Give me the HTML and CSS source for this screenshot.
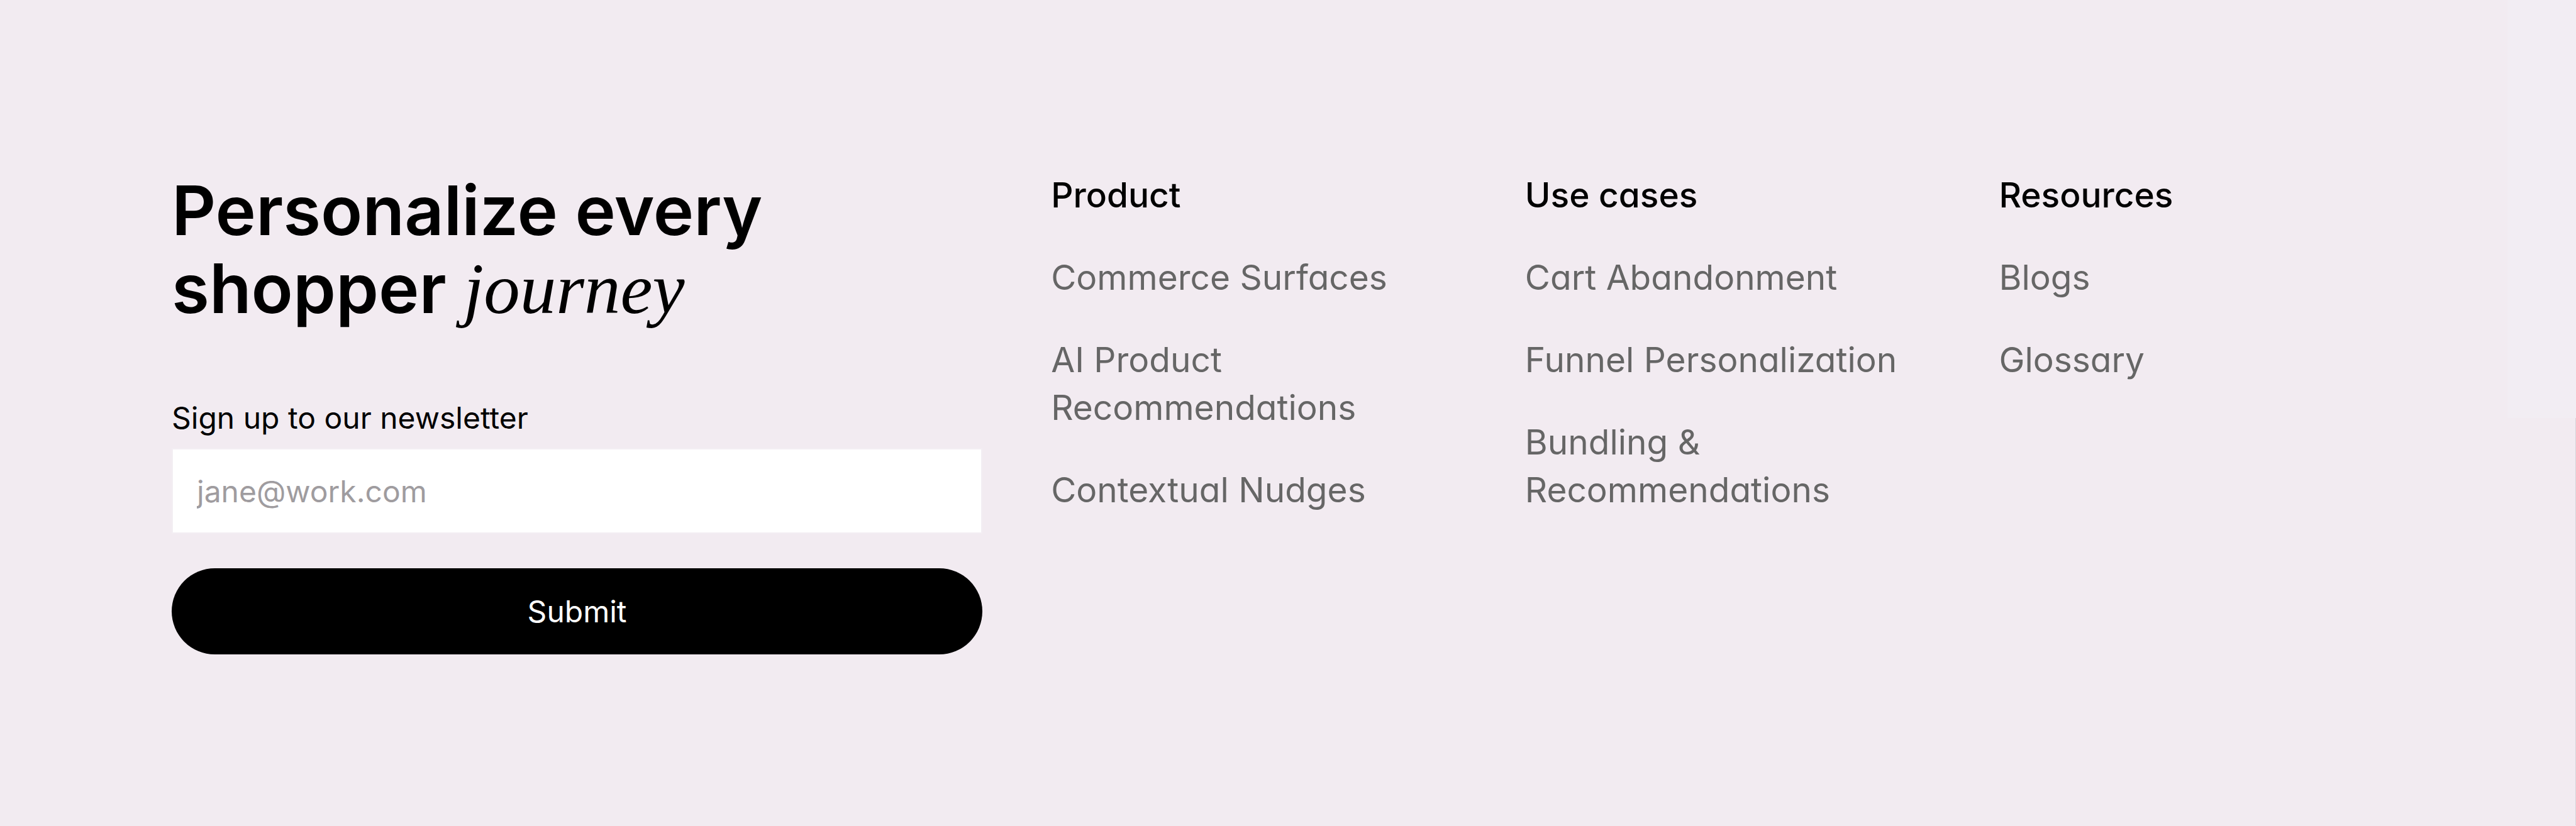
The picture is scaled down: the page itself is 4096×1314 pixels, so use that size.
FILE: index.html
```html
<!DOCTYPE html>
<html lang="en">
<head>
    <meta charset="UTF-8">
    <meta name="viewport" content="width=device-width, initial-scale=1.0">
    <title>Personalize every shopper journey</title>
    <link rel="stylesheet" href="styles.css">
</head>
<body>
    <footer class="footer">
        <div class="footer-main">
            <h2 class="footer-title">Personalize every<br>shopper <em>journey</em></h2>

            <form class="newsletter" action="#">
                <label class="newsletter-label" for="email">Sign up to our newsletter</label>
                <input class="newsletter-input" type="email" id="email" name="email" placeholder="jane@work.com">
                <button class="newsletter-btn" type="submit">Submit</button>
            </form>
        </div>

        <nav class="footer-col" aria-labelledby="col-product">
            <h3 id="col-product">Product</h3>
            <a href="#">Commerce Surfaces</a>
            <a href="#">AI Product Recommendations</a>
            <a href="#">Contextual Nudges</a>
        </nav>

        <nav class="footer-col" aria-labelledby="col-cases">
            <h3 id="col-cases">Use cases</h3>
            <a href="#">Cart Abandonment</a>
            <a href="#">Funnel Personalization</a>
            <a href="#">Bundling &amp; Recommendations</a>
        </nav>

        <nav class="footer-col" aria-labelledby="col-resources">
            <h3 id="col-resources">Resources</h3>
            <a href="#">Blogs</a>
            <a href="#">Glossary</a>
        </nav>
    </footer>
</body>
</html>
```
FILE: styles.css
```css
* {
    box-sizing: border-box;
    margin: 0;
    padding: 0;
}
body {
    font-family: Inter, "Liberation Sans", sans-serif;
    background: #f2ebf1;
    color: #000;
}
.footer {
    position: relative;
    display: grid;
    grid-template-columns: 2fr 1fr 1fr 1fr;
    gap: 109px;
    padding: 272px 273px;
}
/* lighter strip in the top right corner, thin edge line below it */
.footer::before,
.footer::after {
    content: "";
    position: absolute;
    right: 0;
}
.footer::before {
    top: 0;
    width: 109px;
    height: 665px;
    background: #f2edf3;
}
.footer::after {
    top: 665px;
    bottom: 0;
    width: 1px;
    background: #d8d2d8;
}
.footer-title {
    font-size: 109px;
    font-weight: 600;
    line-height: 124px;
    margin-bottom: 113px;
}
.footer-title em {
    font-family: "Liberation Serif", serif;
    font-size: 115px;
    font-weight: 400;
    font-style: italic;
    line-height: 0;
}
.newsletter {
    display: flex;
    flex-direction: column;
}
.newsletter-label {
    font-size: 48px;
    line-height: 64px;
    margin-bottom: 16px;
}
.newsletter-input {
    height: 136px;
    padding: 0 38px;
    border: 2px solid #f3eef3;
    background: #fff;
    font-family: inherit;
    font-size: 48px;
    margin-bottom: 55px;
}
.newsletter-input::placeholder {
    color: #9f9c9f;
    opacity: 1;
}
.newsletter-btn {
    height: 137px;
    border: none;
    border-radius: 69px;
    background: #000;
    color: #fff;
    font-family: inherit;
    font-size: 48px;
    cursor: pointer;
}
.footer-col {
    display: flex;
    flex-direction: column;
    gap: 55px;
    font-size: 55px;
    line-height: 76px;
    font-feature-settings: "cv11";
}
.footer-col h3 {
    font-size: 55px;
    font-weight: 500;
}
.footer-col a {
    color: #666;
    text-decoration: none;
}
.footer-col a:hover {
    color: #000;
}
```
